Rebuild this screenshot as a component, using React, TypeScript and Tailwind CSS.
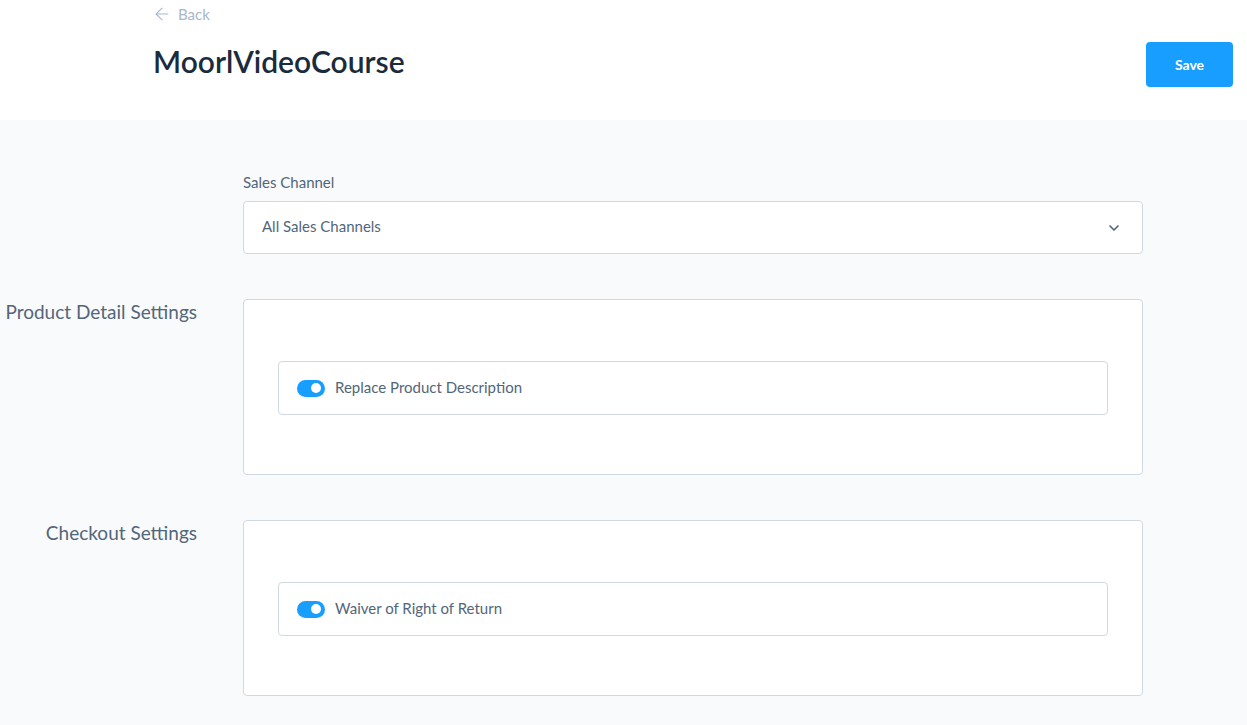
import { ChevronDown, ArrowLeft } from "lucide-react";

const Toggle: React.FC<{ label: string }> = ({ label }) => {
  return (
    <div className="mx-[34px] h-[54px] border border-[#d1d9e0] rounded bg-white flex items-center px-[18px]">
      <div className="w-[28px] h-[17px] rounded-full bg-[#189eff] flex items-center justify-end pr-[4px]">
        <div className="w-[10px] h-[10px] rounded-full bg-white" />
      </div>
      <span className="ml-[10px] text-[15px] text-[#52667a] leading-[20px] pb-[2px]">{label}</span>
    </div>
  );
};

const SettingsCard: React.FC<{ title: string; label: string }> = ({ title, label }) => {
  return (
    <div className="flex">
      <div className="w-[197px] text-right pt-[1px] text-[19px] text-[#52667a] leading-[24px]">{title}</div>
      <div className="ml-[46px] w-[900px] h-[176px] bg-white border border-[#d1d9e0] rounded pt-[61px]">
        <Toggle label={label} />
      </div>
    </div>
  );
};

export default function App() {
  return (
    <div className="min-h-[725px] bg-[#f9fafb]" style={{ fontFamily: "Lato, 'Open Sans', sans-serif" }}>
      <div className="bg-white h-[120px] flex">
        <div className="ml-[152px] flex-1">
          <div className="flex items-center gap-[6px] pt-[4px] text-[#a8b8c9] text-[15px] leading-[20px]">
            <ArrowLeft size={20} strokeWidth={1.3} />
            <span>Back</span>
          </div>
          <h1 className="mt-[19px] ml-[1px] text-[30px] leading-[36px] font-semibold text-[#1a2b3c]">MoorlVideoCourse</h1>
        </div>
        <button className="mt-[42px] mr-[14px] w-[87px] h-[45px] rounded bg-[#189eff] text-white text-[14px] font-bold">
          Save
        </button>
      </div>
      <div className="pt-[52px] pb-[30px]">
        <div className="ml-[243px] w-[900px]">
          <div className="text-[15px] text-[#52667a] leading-[20px] mb-[9px]">Sales Channel</div>
          <div className="h-[53px] border border-[#d1d9e0] rounded bg-white flex items-center justify-between pl-[18px] pr-[20px]">
            <span className="text-[15px] text-[#52667a] pb-[2px]">All Sales Channels</span>
            <ChevronDown size={16} strokeWidth={2.5} className="text-[#52667a]" />
          </div>
        </div>
        <div className="mt-[45px] flex flex-col gap-[45px]">
          <SettingsCard title="Product Detail Settings" label="Replace Product Description" />
          <SettingsCard title="Checkout Settings" label="Waiver of Right of Return" />
        </div>
      </div>
    </div>
  );
}
